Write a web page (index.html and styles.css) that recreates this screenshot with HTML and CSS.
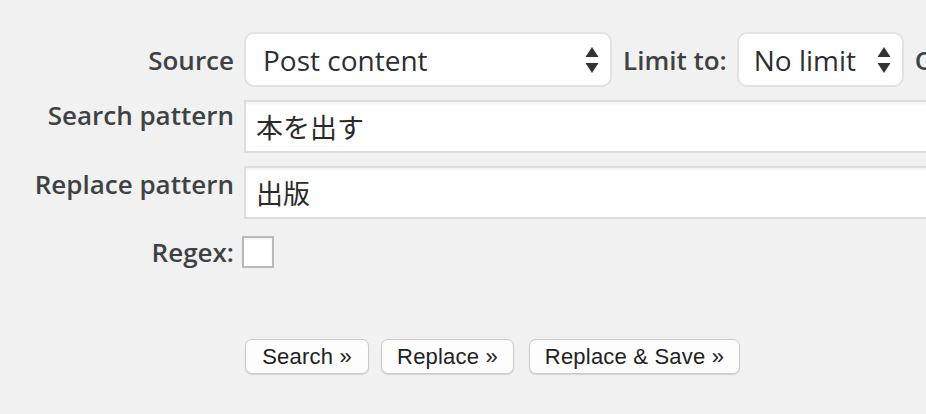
FILE: index.html
```html
<!DOCTYPE html>
<html lang="ja">
<head>
<meta charset="utf-8">
<title>Search &amp; Replace</title>
<link rel="stylesheet" href="styles.css">
</head>
<body>
<div class="form">
  <div class="row row-source">
    <div class="label">Source</div>
    <div class="select select-source">
      <span>Post content</span>
      <svg class="arrows" width="14" height="26" viewBox="0 0 14 26"><path d="M7 0 L13.5 10 L0.5 10 Z M0.5 16 L13.5 16 L7 26 Z" fill="#333"/></svg>
    </div>
    <div class="label inline">Limit to:</div>
    <div class="select select-limit">
      <span>No limit</span>
      <svg class="arrows" width="14" height="26" viewBox="0 0 14 26"><path d="M7 0 L13.5 10 L0.5 10 Z M0.5 16 L13.5 16 L7 26 Z" fill="#333"/></svg>
    </div>
    <div class="label inline trail">Order by</div>
  </div>
  <div class="row row-text">
    <div class="label top">Search pattern</div>
    <div class="input">本を出す</div>
  </div>
  <div class="row row-text">
    <div class="label top lower">Replace pattern</div>
    <div class="input">出版</div>
  </div>
  <div class="row row-regex">
    <div class="label">Regex:</div>
    <div class="checkbox"></div>
  </div>
  <div class="buttons">
    <button class="btn btn-search">Search »</button>
    <button class="btn btn-replace">Replace »</button>
    <button class="btn btn-save">Replace &amp; Save »</button>
  </div>
</div>
</body>
</html>
```
FILE: styles.css
```css
html, body {
  margin: 0;
  padding: 0;
  overflow: hidden;
  background: #f1f1f1;
}
body {
  width: 926px;
  height: 414px;
}
.form {
  padding-top: 32px;
  font-family: "Open Sans", "Noto Sans CJK JP", sans-serif;
}
.row {
  display: flex;
  align-items: center;
  white-space: nowrap;
}
.label {
  width: 234px;
  margin-right: 10px;
  flex: none;
  text-align: right;
  font-size: 26px;
  font-weight: 600;
  color: #3f4245;
  line-height: 30px;
}
.label.inline {
  width: auto;
  margin: 0 10px 0 11px;
}
.label.trail {
  margin-right: 0;
}
.label.top {
  align-self: flex-start;
}
.label.lower {
  margin-top: 3px;
}
.row-source {
  height: 55px;
  margin-bottom: 13px;
}
.select {
  flex: none;
  box-sizing: border-box;
  height: 55px;
  display: flex;
  align-items: center;
  justify-content: space-between;
  background: #fff;
  border: 2px solid #e2e2e2;
  border-radius: 10px;
  font-size: 28px;
  color: #2c2f33;
  padding: 0 11px 0 17px;
}
.select-source {
  width: 368px;
}
.select-limit {
  width: 167px;
  padding-left: 15px;
}
.arrows {
  display: block;
  flex: none;
}
.row-text {
  margin-bottom: 13px;
}
.input {
  flex: none;
  box-sizing: border-box;
  width: 760px;
  height: 53px;
  background: #fff;
  border: 2px solid #dedede;
  box-shadow: inset 0 2px 3px rgba(0, 0, 0, 0.05);
  padding-left: 10px;
  display: flex;
  align-items: center;
  font-family: "Noto Sans CJK JP", sans-serif;
  font-size: 27px;
  color: #2a2a2a;
}
.row-regex {
  margin-top: 4px;
  padding-top: 4px;
  height: 32px;
}
.checkbox {
  box-sizing: border-box;
  width: 32px;
  height: 32px;
  margin-left: -2px;
  background: #fff;
  border: 2px solid #b9b9b9;
  box-shadow: inset 0 1px 2px rgba(0, 0, 0, 0.08);
}
.buttons {
  display: flex;
  margin-top: 71px;
  padding-left: 245px;
}
.btn {
  box-sizing: border-box;
  height: 35px;
  padding: 0;
  text-align: center;
  white-space: nowrap;
  background: #fdfdfd;
  border: 1px solid #cbcbcb;
  border-radius: 7px;
  box-shadow: 0 1px 1px rgba(0, 0, 0, 0.12);
  font-family: "Liberation Sans", Arial, sans-serif;
  font-size: 22px;
  letter-spacing: 0.2px;
  color: #222;
  line-height: 33px;
}
.btn-search { width: 124px; }
.btn-replace { width: 133px; margin-left: 12px; }
.btn-save { width: 211px; margin-left: 15px; }
```
